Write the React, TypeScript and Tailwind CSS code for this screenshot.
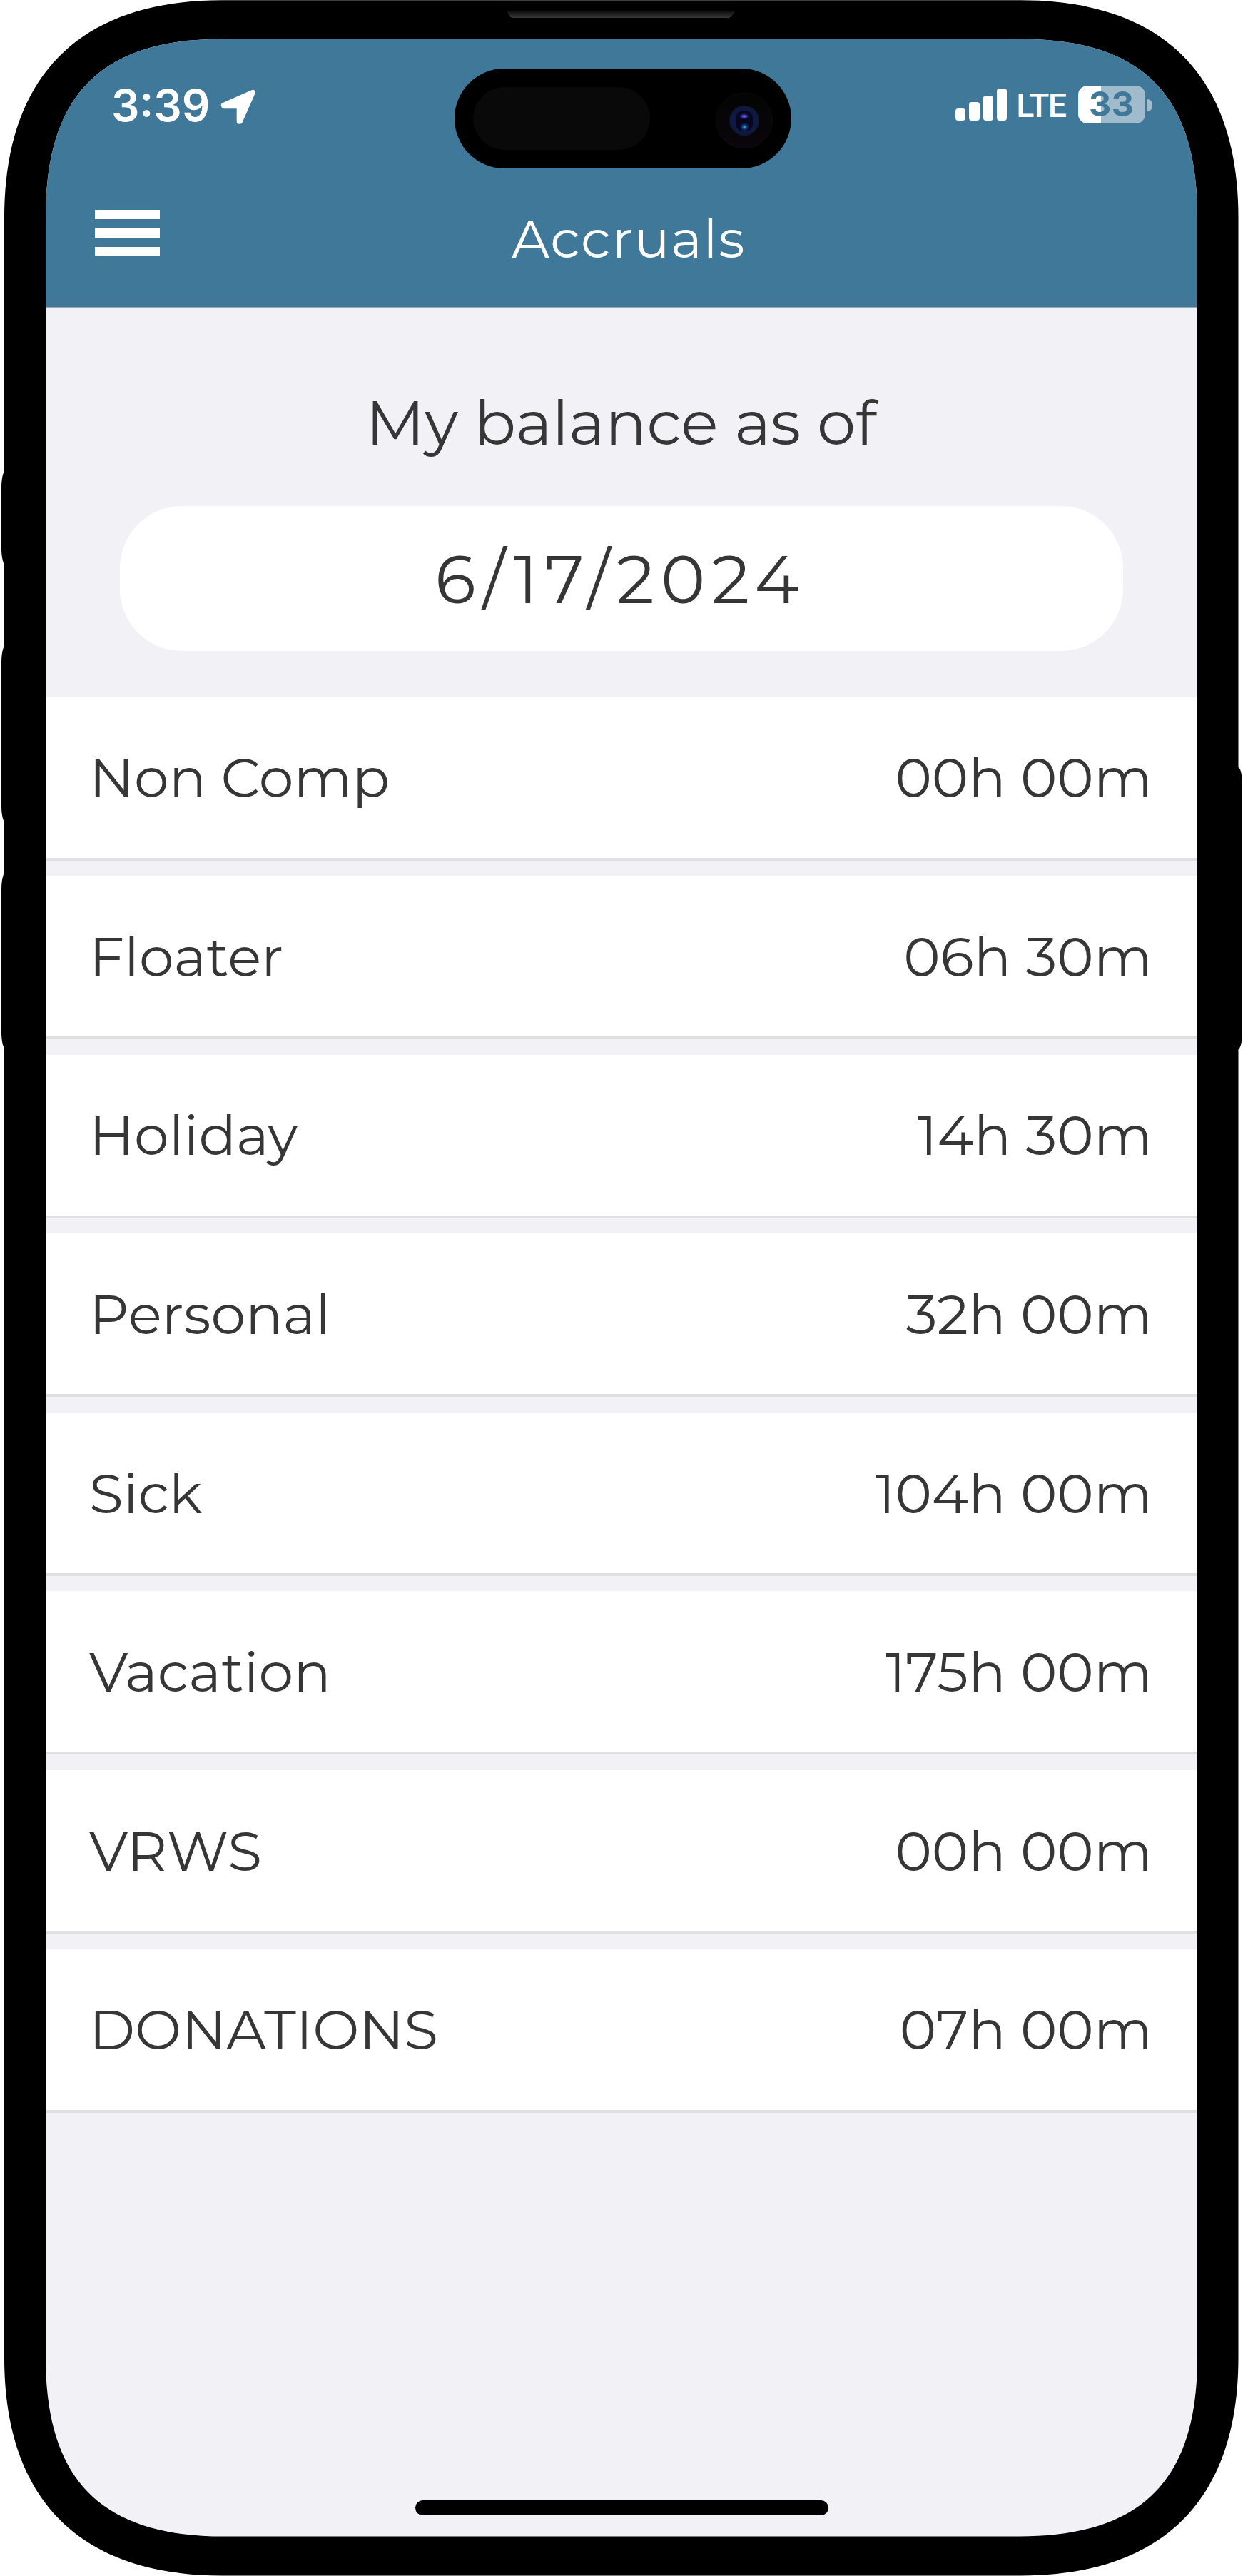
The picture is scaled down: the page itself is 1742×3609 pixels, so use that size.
interface Accrual {
  label: string;
  balance: string;
}

const accruals: Accrual[] = [
  { label: "Non Comp", balance: "00h 00m" },
  { label: "Floater", balance: "06h 30m" },
  { label: "Holiday", balance: "14h 30m" },
  { label: "Personal", balance: "32h 00m" },
  { label: "Sick", balance: "104h 00m" },
  { label: "Vacation", balance: "175h 00m" },
  { label: "VRWS", balance: "00h 00m" },
  { label: "DONATIONS", balance: "07h 00m" },
];

export default function App() {
  return (
    <div className="relative h-[3609px] w-[1742px] overflow-hidden bg-white pl-[6px] font-[Montserrat,Inter,sans-serif] text-[#363636]">
      <SideButtons />
      <div className="relative h-[3609px] w-[1730px] bg-black pt-[54px] pl-[58px] [clip-path:path('M0_305C0_106_106_0.35_305_0.35H1424.5C1623.5_0.35_1729.5_106_1729.5_305V3303C1729.5_3502_1623.5_3608.4_1424.5_3608.4H305C106_3608.4_0_3502_0_3303Z')]">
        {/* earpiece */}
        <div className="absolute top-[15px] left-[704px] h-[10px] w-[321px] bg-linear-to-b from-[#0c0c0c] to-[#383838] [clip-path:polygon(0_0,100%_0,98%_85%,97%_100%,2.5%_100%,1.5%_85%)]" />
        <div className="relative flex h-[3500px] w-[1614px] flex-col bg-[#f2f1f6] [clip-path:path('M0_250C0_78_78_0.4_250_0.4H1364C1536_0.4_1614_78_1614_250V3249C1614_3421_1536_3499.6_1364_3499.6H250C78_3499.6_0_3421_0_3249Z')]">
          <header className="h-[378px] shrink-0 border-b-2 border-[#a0a5ac] bg-[#407899] text-white">
            <StatusBar />
            <NavBar title="Accruals" />
          </header>
          <DynamicIsland />
          <BalanceDate date="6/17/2024" />
          <ul className="mt-[64.5px] flex flex-col gap-[21.6px]">
            {accruals.map((a) => (
              <AccrualRow key={a.label} {...a} />
            ))}
          </ul>
          <div className="mx-auto mt-auto mb-[30px] h-[21px] w-[579px] rounded-full bg-black" />
        </div>
      </div>
    </div>
  );
}

function SideButtons() {
  return (
    <>
      <div className="absolute top-[659px] left-[1.6px] h-[133px] w-[12px] rounded-[6px/24px] bg-black" />
      <div className="absolute top-[904px] left-[1.6px] h-[249px] w-[12px] rounded-[6px/24px] bg-black" />
      <div className="absolute top-[1222px] left-[1.6px] h-[248px] w-[12px] rounded-[6px/24px] bg-black" />
      <div className="absolute top-[1075px] left-[1729px] h-[395px] w-[12px] rounded-[6px/24px] bg-black" />
    </>
  );
}

function StatusBar() {
  return (
    <div className="flex h-[185px] items-center justify-between pr-[63px] pl-[92px] font-[Inter,sans-serif]">
      <div className="flex items-center gap-[15px]">
        <span className="mt-[2px] text-[62px] font-semibold">3:39</span>
        <svg className="mt-[6px] h-[50px] w-[50px]" viewBox="0 0 50 50" fill="currentColor" stroke="currentColor" strokeWidth="7" strokeLinejoin="round">
          <path d="M45.5 4.2 4.3 22.4 4.8 23.7H26.2V45.3H27.3Z" />
        </svg>
      </div>
      <div className="flex items-center">
        <div className="flex items-end gap-[5px]">
          <div className="h-[17px] w-[14.3px] rounded-[4px] bg-white" />
          <div className="h-[26px] w-[14.3px] rounded-[4px] bg-white" />
          <div className="h-[35px] w-[14.3px] rounded-[4px] bg-white" />
          <div className="h-[45px] w-[14.3px] rounded-[4px] bg-white" />
        </div>
        <span className="mt-[5px] ml-[13px] font-[Roboto,sans-serif] text-[46.5px] font-medium tracking-[-1.6px]">LTE</span>
        <div className="ml-[17px] flex h-[53px] w-[94.5px] items-center justify-center rounded-[13px] bg-linear-to-r from-white from-[34.5%] to-[#a0bbcc] to-[34.5%]">
          <span className="text-[48.5px] font-bold tracking-[0.5px] text-[#407899]">33</span>
        </div>
        <div className="mt-[1px] ml-[2.5px] h-[17px] w-[7.5px] rounded-r-full bg-[#a0bbcc]" />
      </div>
    </div>
  );
}

function NavBar({ title }: { title: string }) {
  return (
    <div className="grid h-[191px] grid-cols-[91px_1fr_91px] items-center px-[69px]">
      <div className="-mt-[16px] flex flex-col gap-[12.7px]">
        <div className="h-[13.3px] bg-white" />
        <div className="h-[13.3px] bg-white" />
        <div className="h-[13.3px] bg-white" />
      </div>
      <h1 className="pl-[20px] text-center text-[74px] tracking-[1.7px]">{title}</h1>
    </div>
  );
}

function DynamicIsland() {
  return (
    <div className="absolute top-[42px] left-[572.5px] flex h-[139.5px] w-[472.5px] items-center justify-between rounded-full bg-black px-[26px]">
      <div className="h-[88px] w-[248px] rounded-full bg-[#090909]" />
      <div className="mt-[7px] flex h-[78px] w-[80px] items-center justify-center rounded-full border border-[#0d0d0e] bg-linear-to-b from-[#040404] to-[#0b060d]">
        <svg className="h-[42px] w-[42px]" viewBox="0 0 42 42">
          <defs>
            <radialGradient id="ring">
              <stop offset="0.5" stopColor="#0a1650" />
              <stop offset="0.85" stopColor="#0f1a40" />
              <stop offset="1" stopColor="#12162a" />
            </radialGradient>
            <radialGradient id="top-glint">
              <stop offset="0" stopColor="#7d7be0" />
              <stop offset="0.5" stopColor="#322d92" />
              <stop offset="1" stopColor="#0b0835" stopOpacity="0" />
            </radialGradient>
            <radialGradient id="bottom-glint">
              <stop offset="0" stopColor="#5fa8c4" />
              <stop offset="0.4" stopColor="#0e4487" />
              <stop offset="1" stopColor="#061a50" stopOpacity="0" />
            </radialGradient>
          </defs>
          <circle cx="21" cy="21" r="21" fill="url(#ring)" />
          <rect x="9" y="7" width="24" height="29" rx="11" fill="#07061f" />
          <ellipse cx="21" cy="15" rx="8" ry="4.5" fill="url(#top-glint)" />
          <ellipse cx="21.5" cy="30" rx="7.5" ry="6.5" fill="url(#bottom-glint)" />
        </svg>
      </div>
    </div>
  );
}

function BalanceDate({ date }: { date: string }) {
  return (
    <section className="flex flex-col items-center pt-[104.5px] pr-[104.5px] pl-[103.5px]">
      <h2 className="text-[86.4px] leading-[110px]">My balance as of</h2>
      <div className="mt-[62px] flex h-[203.5px] w-full items-center justify-center rounded-[87px] bg-white pt-[2px] pr-[3px] text-[94px] tracking-[9px]">
        {date}
      </div>
    </section>
  );
}

function AccrualRow({ label, balance }: Accrual) {
  return (
    <li className="flex h-[229px] items-center justify-between border-b-4 border-[#e0e0e0] bg-white pt-[1px] pr-[63px] pl-[61px] text-[77.6px]">
      <span>{label}</span>
      <span>{balance}</span>
    </li>
  );
}
